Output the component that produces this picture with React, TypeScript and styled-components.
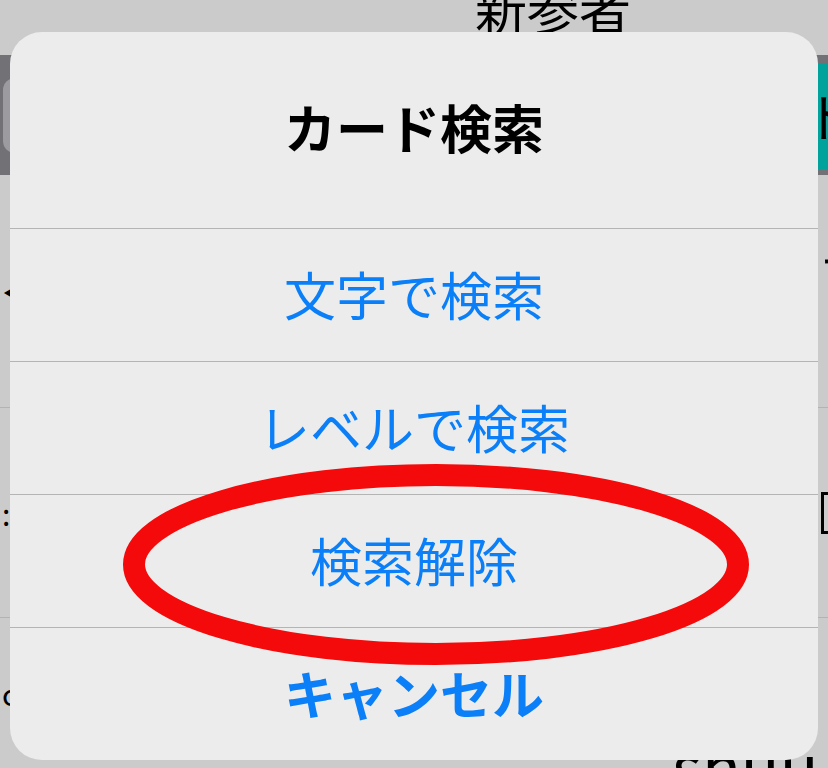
import React from 'react';
import styled, { createGlobalStyle } from 'styled-components';

const GlobalStyle = createGlobalStyle`
  html, body {
    margin: 0;
    padding: 0;
    background: #cbcbcb;
    overflow: hidden;
  }
  body {
    font-family: "Noto Sans CJK JP", "Noto Sans", sans-serif;
  }
`;

const options = ['文字で検索', 'レベルで検索', '検索解除'];

const App: React.FC = () => {
  return (
    <Page>
      <GlobalStyle />
      <TopBar>
        <BgTitle>新参者</BgTitle>
      </TopBar>
      <NavBand>
        <SearchField />
        <TealButton>ト</TealButton>
      </NavBand>
      <ListRow $height={233}>
        <EdgeMark>◀</EdgeMark>
        <EdgeGlyph>す</EdgeGlyph>
      </ListRow>
      <ListRow $height={210}>
        <EdgeMark>:</EdgeMark>
        <CheckBox />
      </ListRow>
      <ListRow $height={150} $last>
        <EdgeMark>c</EdgeMark>
        <BottomText>shuu</BottomText>
      </ListRow>

      <Sheet>
        <SheetTitle>カード検索</SheetTitle>
        {options.map((label) => (
          <SheetOption key={label}>{label}</SheetOption>
        ))}
        <SheetOption $bold>キャンセル</SheetOption>
        <Circle width="808" height="728" viewBox="0 0 808 728">
          <ellipse cx="426" cy="532.5" rx="302" ry="89.5" fill="none" stroke="#f40a0a" strokeWidth="22" />
        </Circle>
      </Sheet>
    </Page>
  );
};

const Page = styled.div`
  position: relative;
  width: 828px;
  height: 768px;
  overflow: hidden;
  background: #cbcbcb;
`;

const TopBar = styled.div`
  height: 55px;
  display: flex;
  align-items: flex-end;
  padding-left: 475px;
  box-sizing: border-box;
  overflow: hidden;
`;

const BgTitle = styled.div`
  font-size: 52px;
  line-height: 52px;
  color: #000;
  margin-bottom: 21px;
  white-space: nowrap;
`;

const NavBand = styled.div`
  height: 120px;
  background: #717176;
  display: flex;
  align-items: center;
`;

const SearchField = styled.div`
  margin-left: 3px;
  width: 400px;
  height: 75px;
  border-radius: 12px;
  background: #9b9ba0;
`;

const TealButton = styled.div`
  margin-left: auto;
  width: 10px;
  height: 106px;
  margin-top: 1px;
  background: #00a39b;
  color: #000;
  font-size: 52px;
  line-height: 106px;
  text-indent: -14px;
  overflow: hidden;
  white-space: nowrap;
`;

const ListRow = styled.div<{ $height: number; $last?: boolean }>`
  height: ${(p) => p.$height}px;
  box-sizing: border-box;
  border-bottom: ${(p) => (p.$last ? 'none' : '1px solid #b3b3b3')};
  display: flex;
  align-items: center;
  justify-content: space-between;
  position: relative;
`;

const EdgeMark = styled.div`
  font-size: 30px;
  color: #000;
  padding-left: 2px;
`;

const EdgeGlyph = styled.div`
  font-size: 52px;
  color: #000;
  width: 8px;
  overflow: hidden;
  margin-bottom: 40px;
`;

const CheckBox = styled.div`
  width: 40px;
  height: 42px;
  border: 3px solid #000;
  margin-right: -33px;
  box-sizing: border-box;
`;

const BottomText = styled.div`
  position: absolute;
  left: 672px;
  top: 114px;
  font-size: 64px;
  line-height: 64px;
  color: #000;
`;

const Sheet = styled.div`
  position: absolute;
  left: 10px;
  top: 32px;
  width: 808px;
  height: 728px;
  background: #ececec;
  border-radius: 32px;
  display: flex;
  flex-direction: column;
  overflow: hidden;
`;

const SheetTitle = styled.div`
  height: 197px;
  box-sizing: border-box;
  padding-bottom: 8px;
  display: flex;
  align-items: center;
  justify-content: center;
  font-size: 52px;
  font-weight: 700;
  color: #000;
`;

const SheetOption = styled.div<{ $bold?: boolean }>`
  height: 133px;
  flex-shrink: 0;
  box-sizing: border-box;
  border-top: 1px solid #b4b4b4;
  display: flex;
  align-items: center;
  justify-content: center;
  padding-bottom: 4px;
  font-size: 52px;
  font-weight: ${(p) => (p.$bold ? 700 : 400)};
  color: #0b7ff7;
`;

const Circle = styled.svg`
  position: absolute;
  left: 0;
  top: 0;
  pointer-events: none;
`;

export default App;
